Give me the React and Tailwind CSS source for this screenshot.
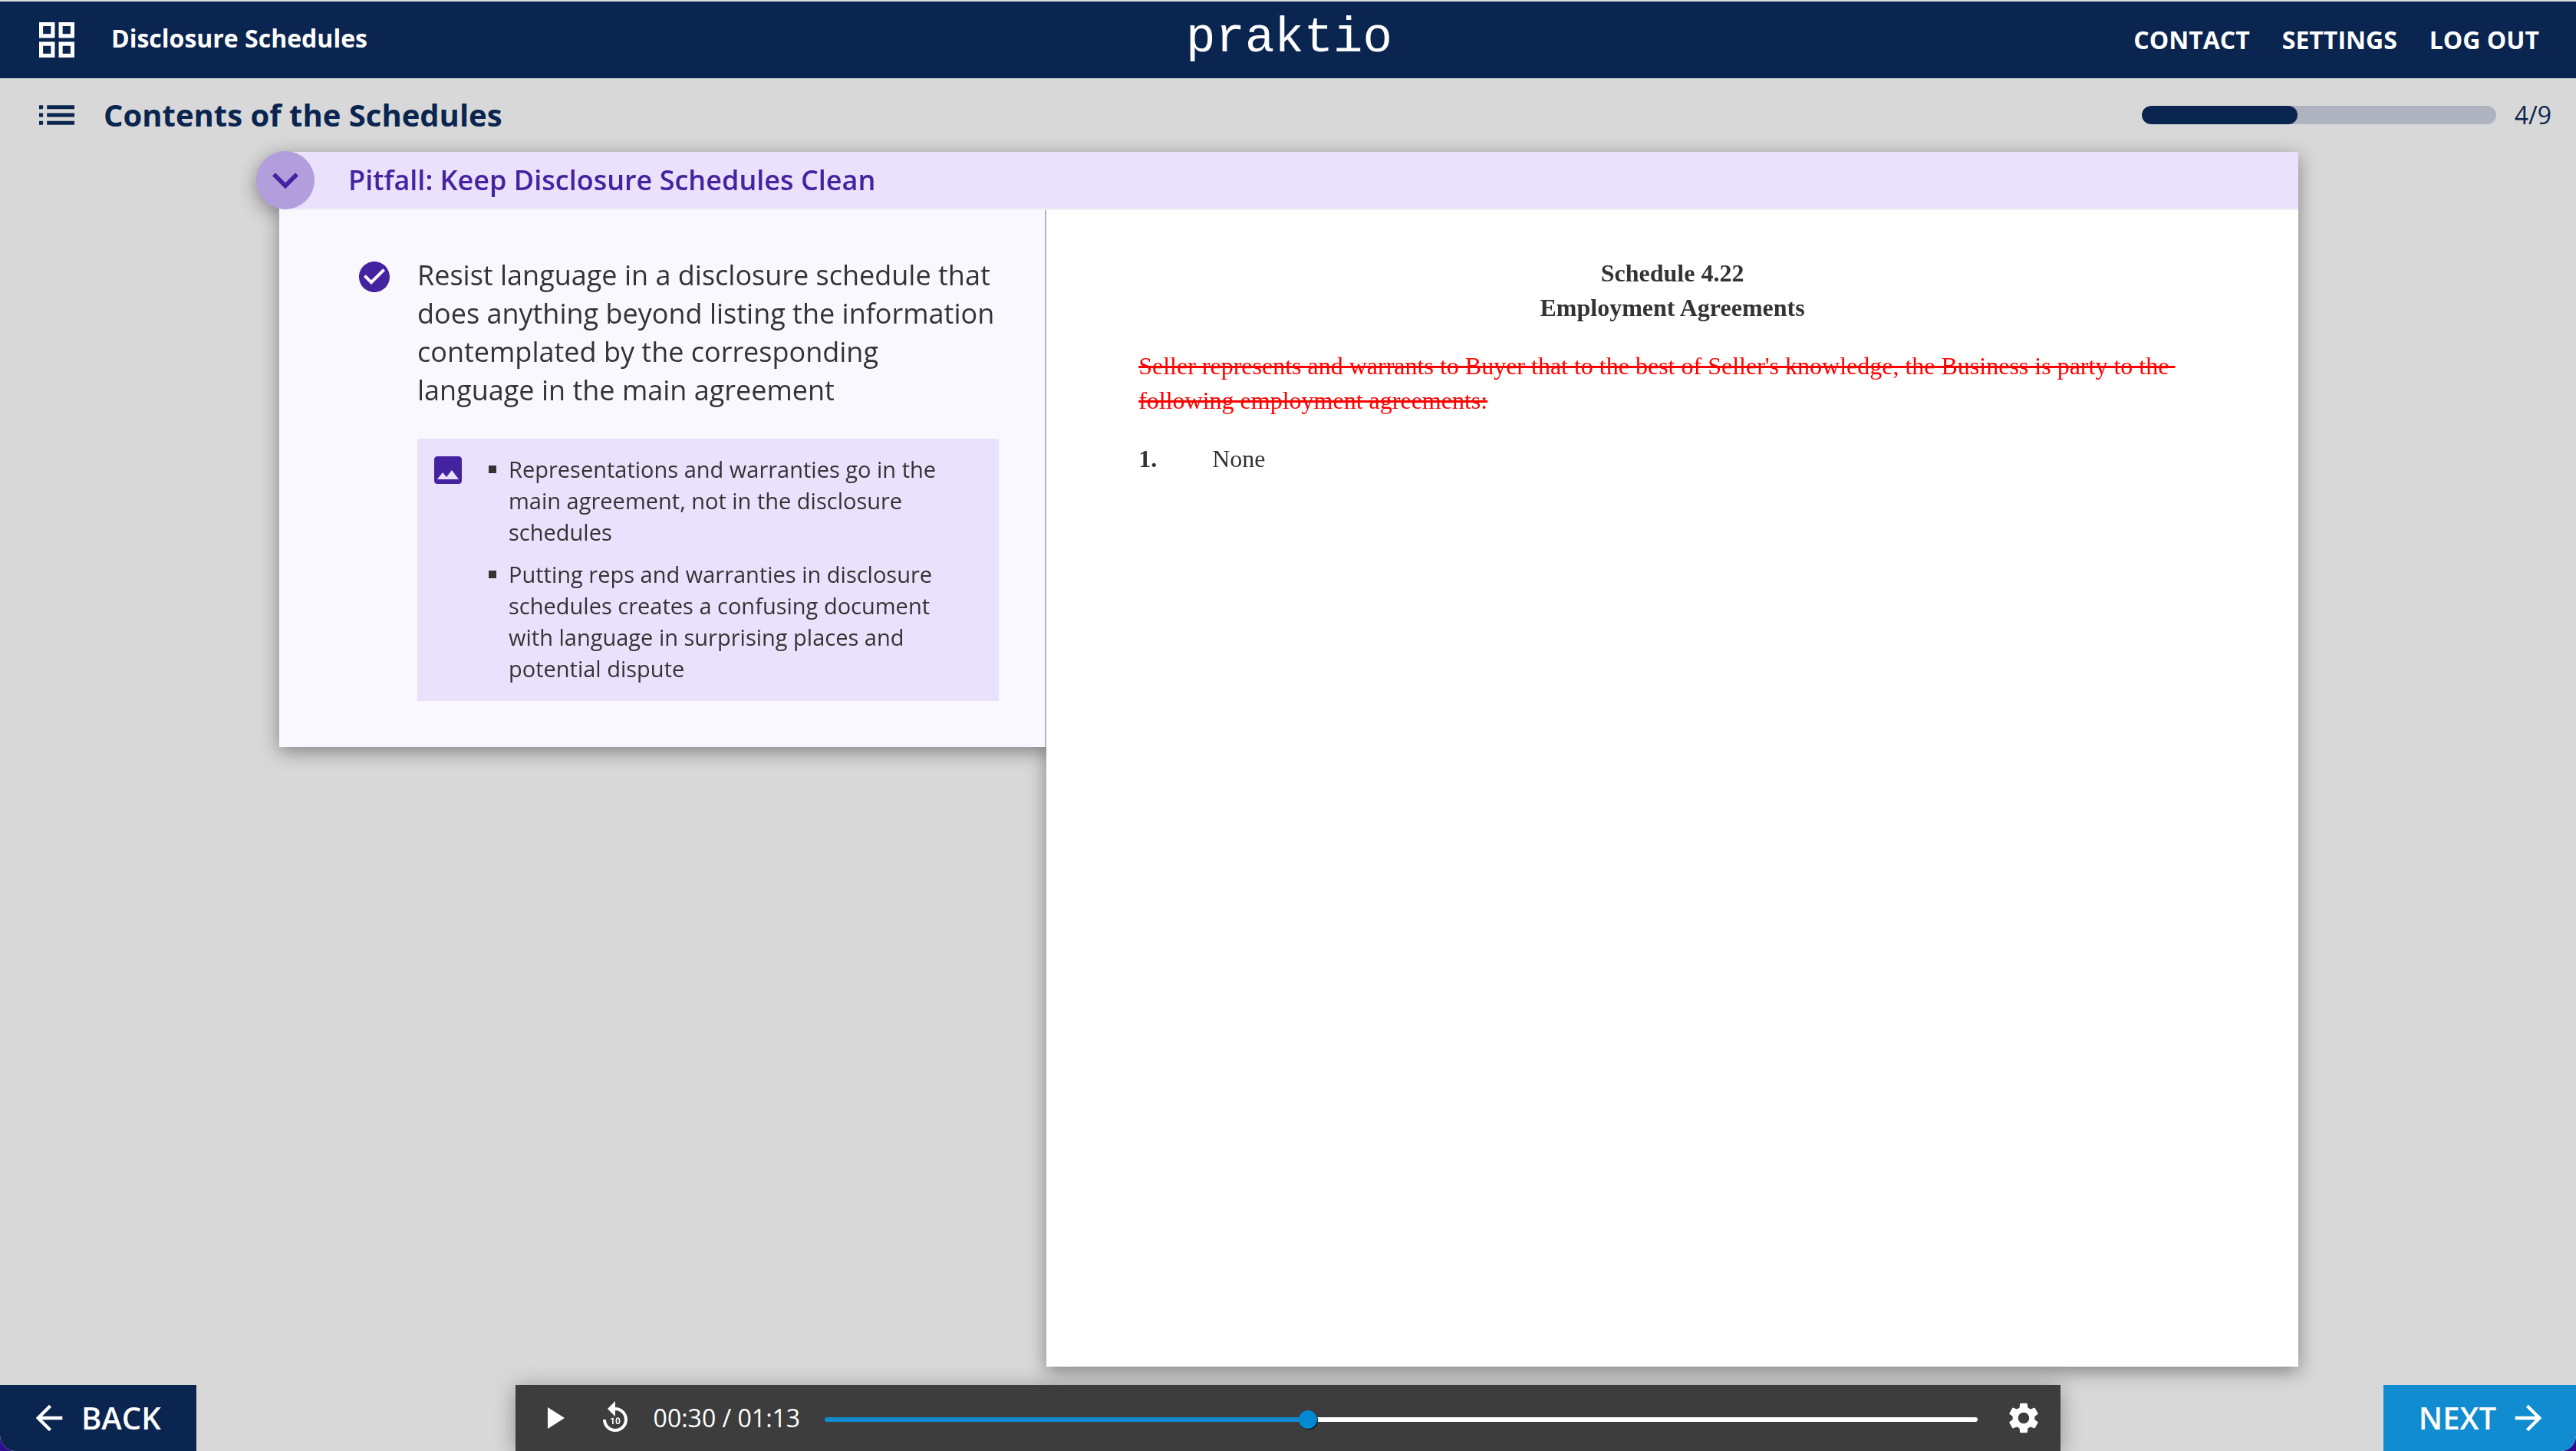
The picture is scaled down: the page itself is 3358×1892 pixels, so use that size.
import { useState } from "react";
import {
  MdArrowBack,
  MdArrowForward,
  MdCheckCircle,
  MdExpandMore,
  MdImage,
  MdPlayArrow,
  MdReplay10,
  MdSettings,
} from "react-icons/md";

function GridIcon() {
  return (
    <svg viewBox="3 3 18 18" className="size-[46px]" fill="currentColor" aria-hidden="true">
      <path d="M3 3v8h8V3H3zm6 6H5V5h4v4zM3 13v8h8v-8H3zm6 6H5v-4h4v4zM13 3v8h8V3h-8zm6 6h-4V5h4v4zM13 13v8h8v-8h-8zm6 6h-4v-4h4v4z" />
    </svg>
  );
}

function ListIcon() {
  return (
    <svg viewBox="3 7 18 10" className="h-[26px] w-[46px]" fill="currentColor" aria-hidden="true">
      <path d="M3 13h2v-2H3v2zm0 4h2v-2H3v2zm0-8h2V7H3v2zm4 4h14v-2H7v2zm0 4h14v-2H7v2zM7 7v2h14V7H7z" />
    </svg>
  );
}

function TopBar() {
  return (
    <header className="grid h-[102px] grid-cols-[1fr_auto_1fr] items-center border-t-2 border-[#d8dbe2] bg-[#0a2550] pr-12 pl-[51px] text-white">
      <div className="flex items-center gap-12">
        <button type="button" aria-label="All courses">
          <GridIcon />
        </button>
        <span className="pb-1 text-[32px] leading-11 font-bold">Disclosure Schedules</span>
      </div>
      <a href="#home" className="pb-1 font-['Liberation_Mono',monospace] text-[64px] leading-none">
        praktio
      </a>
      <nav className="flex justify-end gap-[42px] text-[32px] leading-11 font-bold">
        <a href="#contact">CONTACT</a>
        <a href="#settings">SETTINGS</a>
        <a href="#logout">LOG OUT</a>
      </nav>
    </header>
  );
}

function SectionBar({ step, total }) {
  return (
    <div className="flex h-24 items-center justify-between pr-8 pl-[51px] text-[#0a2550]">
      <div className="flex items-center gap-[38px]">
        <button type="button" aria-label="Table of contents">
          <ListIcon />
        </button>
        <h1 className="text-[40px] leading-14 font-bold">Contents of the Schedules</h1>
      </div>
      <div className="flex items-center gap-6">
        <div
          role="progressbar"
          aria-label="Section progress"
          aria-valuemin={0}
          aria-valuemax={total}
          aria-valuenow={step}
          className="h-6 w-[462px] overflow-hidden rounded-full bg-[#afb3bf]"
        >
          <div className="h-full rounded-full bg-[#0a2550]" style={{ width: `${Math.round((step / total) * 100)}%` }} />
        </div>
        <span className="text-[32px] leading-11">
          {step}/{total}
        </span>
      </div>
    </div>
  );
}

const notes = [
  "Representations and warranties go in the main agreement, not in the disclosure schedules",
  "Putting reps and warranties in disclosure schedules creates a confusing document with language in surprising places and potential dispute",
];

function LessonPanel() {
  return (
    <section className="flex w-[38%] gap-8 self-start border-r-2 border-[#b4b4b8] bg-[#f9f8ff] pt-15 pr-15 pb-15 pl-25">
      <MdCheckCircle className="mt-[3px] size-12 shrink-0 text-[#4523a0]" />
      <div className="min-w-0 flex-1">
        <p className="text-[36px] leading-[50px]">
          Resist language in a disclosure schedule that does anything beyond listing the information contemplated by the
          corresponding language in the main agreement
        </p>
        <div className="mt-[38px] flex gap-7 bg-[#eae1fc] pt-[17px] pr-8 pb-[22px] pl-4">
          <MdImage className="size-12 shrink-0 text-[#4523a0]" />
          <ul className="flex flex-col gap-[14px] pt-[2px] text-[29px] leading-[41px]">
            {notes.map((note) => (
              <li key={note} className="flex gap-4">
                <span className="mt-4 ml-px size-[10px] shrink-0 bg-[#333]" />
                <span>{note}</span>
              </li>
            ))}
          </ul>
        </div>
      </div>
    </section>
  );
}

function DocumentPanel() {
  return (
    <article className="flex-1 bg-white px-30 pt-15 font-['Liberation_Serif',serif] text-[32px] leading-[45px]">
      <h3 className="text-center font-bold">
        Schedule 4.22
        <br />
        Employment Agreements
      </h3>
      <p className="mt-[31px] text-[#ff0000]">
        <del className="decoration-[3px]">
          {
            "Seller represents and warrants to Buyer that to the best of Seller's knowledge, the Business is party to the\u00a0 following employment agreements:"
          }
        </del>
      </p>
      <div className="mt-[31px] flex">
        <span className="w-24 font-bold">1.</span>
        <span>None</span>
      </div>
    </article>
  );
}

function Card() {
  return (
    <main className="mr-[362px] mb-6 ml-[364px] flex flex-1 flex-col text-[#333] drop-shadow-[0_6px_12px_rgba(0,0,0,0.4)]">
      <div className="flex h-[76px] items-center border-b-2 border-[#f1f1f4] bg-[#eae1fc]">
        <button
          type="button"
          aria-label="Collapse"
          className="-ml-[30px] flex size-19 shrink-0 items-center justify-center rounded-full bg-[#b29ddd] text-[#4523a0]"
        >
          <MdExpandMore className="size-17" />
        </button>
        <h2 className="ml-11 text-[36px] leading-[50px] font-semibold text-[#4523a0]">
          Pitfall: Keep Disclosure Schedules Clean
        </h2>
      </div>
      <div className="flex flex-1">
        <LessonPanel />
        <DocumentPanel />
      </div>
    </main>
  );
}

const duration = 73;

function Player() {
  const [position, setPosition] = useState(30.5);
  const percent = (position / duration) * 100;
  const fmt = (s) => `${String(Math.floor(s / 60)).padStart(2, "0")}:${String(Math.floor(s % 60)).padStart(2, "0")}`;
  return (
    <div className="flex w-3/5 items-center bg-[#3d3d3d] pr-6 pl-[26px] text-white shadow-[0_4px_28px_rgba(0,0,0,0.35)]">
      <button type="button" aria-label="Play">
        <MdPlayArrow className="size-12" />
      </button>
      <button type="button" aria-label="Back 10 seconds" className="ml-8">
        <MdReplay10 className="size-12" />
      </button>
      <span className="ml-[26px] text-[32px] leading-11 whitespace-nowrap">
        {fmt(position)} / {fmt(duration)}
      </span>
      <input
        type="range"
        aria-label="Seek"
        min={0}
        max={duration}
        step={0.5}
        value={position}
        onChange={(e) => setPosition(Number(e.target.value))}
        style={{ "--seek": `${percent}%` }}
        className="mr-9 ml-8 mt-1 h-6 min-w-0 flex-1 appearance-none bg-transparent [&::-webkit-slider-runnable-track]:h-[6px] [&::-webkit-slider-runnable-track]:rounded-full [&::-webkit-slider-runnable-track]:bg-[linear-gradient(to_right,#128bd0_var(--seek),#ffffff_var(--seek))] [&::-webkit-slider-thumb]:-mt-[9px] [&::-webkit-slider-thumb]:size-6 [&::-webkit-slider-thumb]:appearance-none [&::-webkit-slider-thumb]:rounded-full [&::-webkit-slider-thumb]:bg-[#0088d1] [&::-webkit-slider-thumb]:shadow-[1px_1px_1px_#0d0d0d]"
      />
      <button type="button" aria-label="Playback settings">
        <MdSettings className="size-12" />
      </button>
    </div>
  );
}

function BottomBar() {
  return (
    <footer className="flex h-[86px] justify-between">
      <div className="flex w-1/5">
        <button
          type="button"
          className="flex items-center gap-4 rounded-bl-[20px] bg-[#0a2550] pr-[46px] pl-[38px] text-[40px] leading-none font-semibold text-white"
        >
          <MdArrowBack className="size-[52px]" />
          BACK
        </button>
      </div>
      <Player />
      <div className="flex w-1/5 justify-end">
        <button
          type="button"
          className="flex items-center gap-4 rounded-br-[20px] bg-[#118cd0] pr-9 pl-[46px] text-[40px] leading-none font-semibold text-white"
        >
          NEXT
          <MdArrowForward className="size-[52px]" />
        </button>
      </div>
    </footer>
  );
}

export default function App() {
  return (
    <div className="min-h-screen bg-[#2e0b90]">
      <div className="flex min-h-screen flex-col overflow-hidden rounded-b-[20px] bg-[#d8d8d8] font-['Open_Sans',sans-serif]">
        <TopBar />
        <SectionBar step={4} total={9} />
        <Card />
        <BottomBar />
      </div>
    </div>
  );
}
